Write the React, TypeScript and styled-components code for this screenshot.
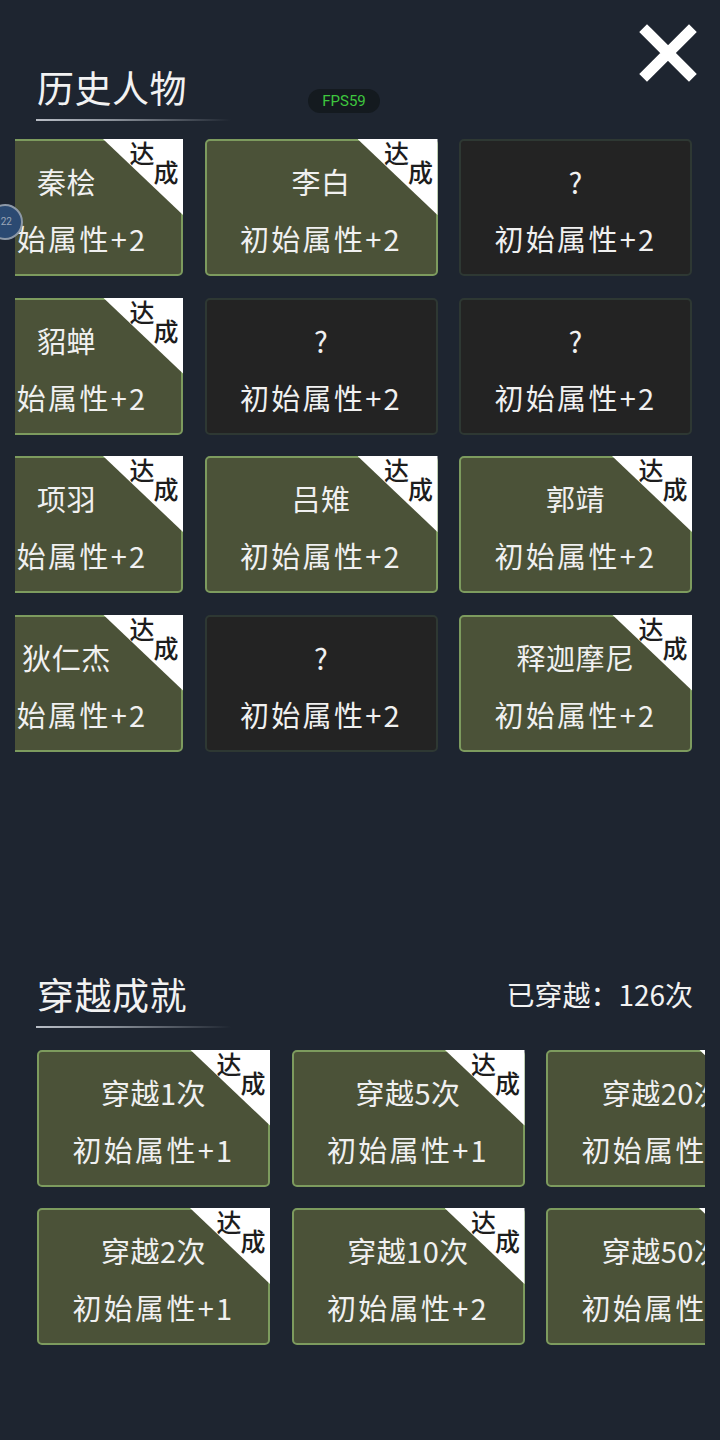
import React from "react";
import styled, { createGlobalStyle } from "styled-components";

const GlobalStyle = createGlobalStyle`
  html, body { margin: 0; padding: 0; background: #1e2530; }
  body { font-family: "Noto Sans CJK SC", "Noto Sans", sans-serif; color: #f0f0f0; }
`;

const Page = styled.div`
  position: relative;
  width: 720px;
  height: 1440px;
  overflow: hidden;
  background: #1e2530;
`;

const CloseButton = styled.button`
  position: absolute;
  top: 24px;
  right: 23px;
  width: 58px;
  height: 58px;
  padding: 0;
  border: none;
  background: transparent;
  cursor: pointer;
`;

const FpsBadge = styled.div`
  position: absolute;
  left: 308px;
  top: 89px;
  width: 72px;
  height: 24px;
  border-radius: 12px;
  background: #141a1f;
  color: #3ec63e;
  font-family: Roboto, "Noto Sans", sans-serif;
  font-size: 15px;
  line-height: 24px;
  text-align: center;
`;

const SideDot = styled.div`
  position: absolute;
  left: -13px;
  top: 204px;
  width: 32px;
  height: 32px;
  border-radius: 50%;
  background: #2b4a72;
  border: 2px solid #8d99a8;
  color: #9aa6b8;
  font-family: Roboto, sans-serif;
  font-size: 10px;
  line-height: 32px;
  text-align: right;
  z-index: 2;
`;

const DotText = styled.span`
  display: inline-block;
  padding-right: 9px;
`;

const Section = styled.section<{ $top: number }>`
  padding-top: ${(p) => p.$top}px;
`;

const HeaderRow = styled.div`
  display: flex;
  align-items: center;
  justify-content: space-between;
  padding: 0 27px 0 37px;
`;

const Title = styled.h2`
  margin: 0;
  font-size: 37px;
  font-weight: 400;
  line-height: 44px;
  color: #f2f2f2;
  letter-spacing: 0.5px;
`;

const Counter = styled.div`
  font-size: 28px;
  line-height: 44px;
  color: #f2f2f2;
  white-space: nowrap;
`;

const Underline = styled.div`
  margin: 10px 0 0 36px;
  width: 195px;
  height: 2px;
  background: linear-gradient(90deg, #b9bec6 0%, #8a9099 40%, rgba(90, 96, 106, 0) 100%);
`;

const Viewport = styled.div<{ $left: number; $width: number; $mt: number }>`
  margin-left: ${(p) => p.$left}px;
  margin-top: ${(p) => p.$mt}px;
  width: ${(p) => p.$width}px;
  overflow: hidden;
`;

const Grid = styled.div<{ $shift: number }>`
  display: grid;
  grid-template-columns: repeat(3, 233px);
  column-gap: 21.5px;
  row-gap: 21.5px;
  margin-left: ${(p) => p.$shift}px;
  width: max-content;
`;

const Card = styled.div<{ $done: boolean }>`
  position: relative;
  box-sizing: border-box;
  height: 137px;
  border-radius: 5px;
  border: 2px solid ${(p) => (p.$done ? "#7d9b5e" : "#2e3833")};
  background: ${(p) => (p.$done ? "#4b5238" : "#232323")};
  display: flex;
  flex-direction: column;
  align-items: center;
  justify-content: center;
  gap: 21px;
  padding-top: 4px;
`;

const Line = styled.div<{ $spacing?: number }>`
  font-size: 29px;
  line-height: 36px;
  color: #f0f0f0;
  white-space: nowrap;
  letter-spacing: ${(p) => p.$spacing ?? 0.5}px;
`;

const Badge = styled.div`
  position: absolute;
  top: -2px;
  right: -2px;
  width: 80px;
  height: 76px;
  background: #ffffff;
  clip-path: polygon(0 0, 100% 0, 100% 100%);
`;

const BadgeChar = styled.span<{ $left: number; $top: number }>`
  position: absolute;
  left: ${(p) => p.$left}px;
  top: ${(p) => p.$top}px;
  width: 26px;
  font-size: 25px;
  line-height: 26px;
  font-weight: 500;
  color: #1d1d1d;
  text-align: center;
`;

type Item = { name: string; attr: string; done: boolean };

const heroes: Item[] = [
  { name: "秦桧", attr: "初始属性+2", done: true },
  { name: "李白", attr: "初始属性+2", done: true },
  { name: "?", attr: "初始属性+2", done: false },
  { name: "貂蝉", attr: "初始属性+2", done: true },
  { name: "?", attr: "初始属性+2", done: false },
  { name: "?", attr: "初始属性+2", done: false },
  { name: "项羽", attr: "初始属性+2", done: true },
  { name: "吕雉", attr: "初始属性+2", done: true },
  { name: "郭靖", attr: "初始属性+2", done: true },
  { name: "狄仁杰", attr: "初始属性+2", done: true },
  { name: "?", attr: "初始属性+2", done: false },
  { name: "释迦摩尼", attr: "初始属性+2", done: true },
];

const travels: Item[] = [
  { name: "穿越1次", attr: "初始属性+1", done: true },
  { name: "穿越5次", attr: "初始属性+1", done: true },
  { name: "穿越20次", attr: "初始属性+2", done: true },
  { name: "穿越2次", attr: "初始属性+1", done: true },
  { name: "穿越10次", attr: "初始属性+2", done: true },
  { name: "穿越50次", attr: "初始属性+2", done: true },
];

const AchCard = ({ item }: { item: Item }) => (
  <Card $done={item.done}>
    <Line>{item.name}</Line>
    <Line $spacing={2.3}>{item.attr}</Line>
    {item.done && (
      <Badge>
        <BadgeChar $left={26} $top={0}>达</BadgeChar>
        <BadgeChar $left={50} $top={19}>成</BadgeChar>
      </Badge>
    )}
  </Card>
);

export default function App() {
  return (
    <Page>
      <GlobalStyle />
      <CloseButton aria-label="close">
        <svg width="58" height="58" viewBox="0 0 58 58">
          <path d="M8 8 L50 50 M50 8 L8 50" stroke="#ffffff" strokeWidth="11" strokeLinecap="square" />
        </svg>
      </CloseButton>
      <FpsBadge>FPS59</FpsBadge>
      <SideDot>
        <DotText>22</DotText>
      </SideDot>

      <Section $top={65}>
        <HeaderRow>
          <Title>历史人物</Title>
        </HeaderRow>
        <Underline />
        <Viewport $left={15} $width={685} $mt={18}>
          <Grid $shift={-65}>
            {heroes.map((h, i) => (
              <AchCard key={i} item={h} />
            ))}
          </Grid>
        </Viewport>
      </Section>

      <Section $top={220}>
        <HeaderRow>
          <Title>穿越成就</Title>
          <Counter>已穿越：126次</Counter>
        </HeaderRow>
        <Underline />
        <Viewport $left={37} $width={668} $mt={22}>
          <Grid $shift={0}>
            {travels.map((h, i) => (
              <AchCard key={i} item={h} />
            ))}
          </Grid>
        </Viewport>
      </Section>
    </Page>
  );
}
